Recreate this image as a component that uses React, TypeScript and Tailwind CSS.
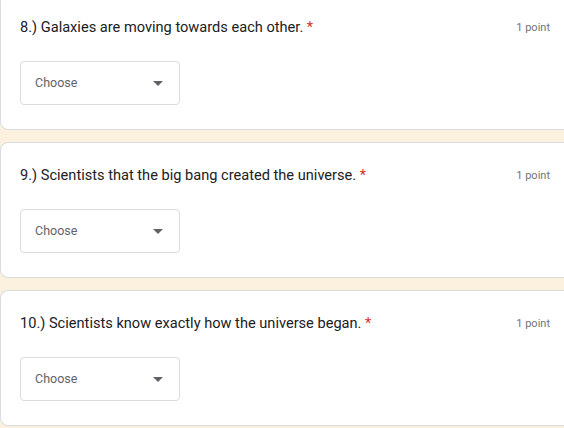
const QUESTIONS = [
  { id: 8, text: "8.) Galaxies are moving towards each other." },
  { id: 9, text: "9.) Scientists that the big bang created the universe." },
  { id: 10, text: "10.) Scientists know exactly how the universe began." },
];

function Question({ text, first }: { text: string; first?: boolean }) {
  return (
    <div
      className={
        "bg-white border border-r-0 border-[#dadce0] rounded-l-lg h-[136px] pl-[19px] pr-[14px] pt-[22px] " +
        (first ? "-mt-[6px]" : "")
      }
    >
      <div className="flex items-start justify-between">
        <p className="text-[14.6px] leading-5 font-normal text-[#202124]">
          {text} <span className="text-[#d93025]">*</span>
        </p>
        <span className="text-[11px] leading-5 text-[#70757a] mt-px">1 point</span>
      </div>
      <div className="mt-[23px] w-40 h-11 border border-[#dadce0] rounded flex items-center justify-between pl-[14px] pr-[16px]">
        <span className="text-[12.5px] text-[#5f6368] mt-px">Choose</span>
        <svg width="10" height="5" viewBox="0 0 10 5">
          <path d="M0 0 L10 0 L5 5 Z" fill="#5f6368" />
        </svg>
      </div>
    </div>
  );
}

export default function App() {
  return (
    <div
      className="w-[564px] h-[428px] overflow-hidden bg-[#fcf1df] flex flex-col gap-3"
      style={{ fontFamily: "Roboto, 'Liberation Sans', sans-serif" }}
    >
      {QUESTIONS.map((q, i) => (
        <Question key={q.id} text={q.text} first={i === 0} />
      ))}
    </div>
  );
}
